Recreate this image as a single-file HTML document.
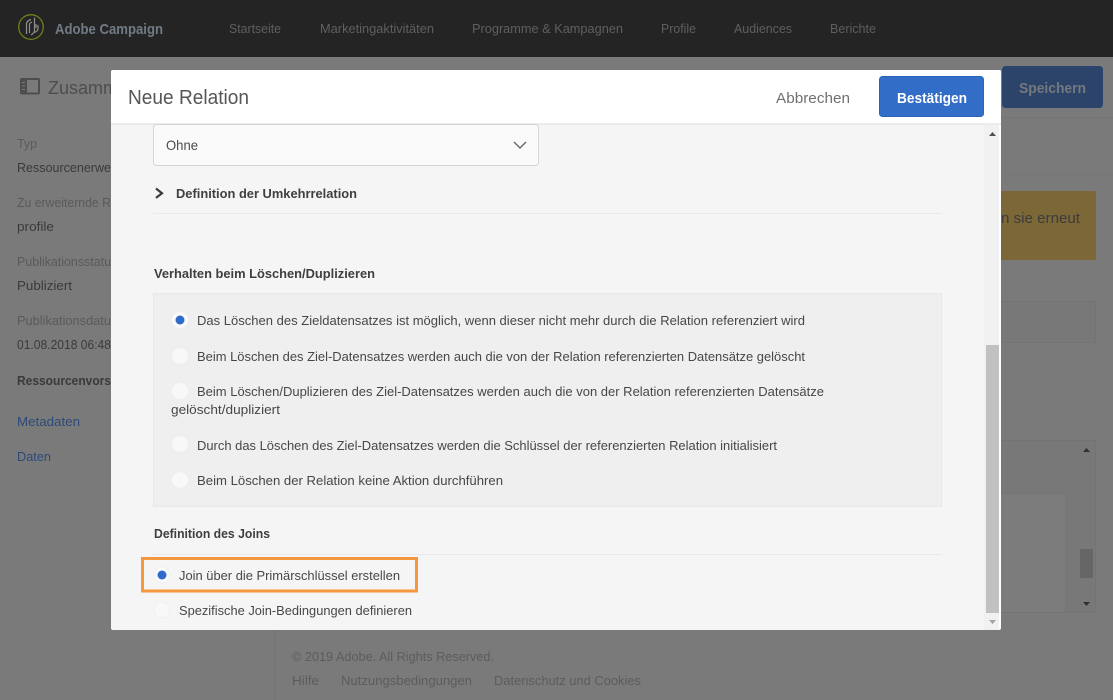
<!DOCTYPE html>
<html lang="de">
<head>
<meta charset="utf-8">
<title>Neue Relation</title>
<style>
html,body{margin:0;padding:0;width:1113px;height:700px;overflow:hidden;background:#7a7a7a}
svg{display:block}
text{font-family:"Liberation Sans",sans-serif;font-size:13px;fill:#4b4b4b;white-space:pre}
.n{font-size:13px;fill:#5f5f5f}
.s{fill:#3a3a3a}
.l{fill:#5a5a5a}
.m{fill:#474747}
.b{font-weight:bold;fill:#3f3f3f}
.f{fill:#5c5c5c;font-size:13px}
</style>
</head>
<body>
<svg width="1113" height="700" viewBox="0 0 1113 700" xmlns="http://www.w3.org/2000/svg">
<!-- background page -->
<rect width="1113" height="700" fill="#7a7a7a"/>
<rect width="1113" height="57" fill="#242424"/>
<circle cx="31" cy="27" r="12.300" fill="none" stroke="#6f7f1c" stroke-width="1.300"/>
<g fill="none" stroke="#8f8f8f" stroke-width="1.200">
<path d="M26.500 34V24Q26.500 21 31 19.500"/><path d="M29.500 33V24.500Q29.500 23 32 22"/><path d="M34.500 17.500V30Q34.500 33 31 35"/><path d="M38 25V28.500Q38 31 34.500 32.500"/><path d="M36 24V28"/>
</g>
<text x="55" y="34" textLength="108" lengthAdjust="spacingAndGlyphs" style="font-size:15px;font-weight:bold;fill:#717b86">Adobe Campaign</text>
<text class="n" x="229" y="33" textLength="52" lengthAdjust="spacingAndGlyphs">Startseite</text>
<text class="n" x="320" y="33" textLength="114" lengthAdjust="spacingAndGlyphs">Marketingaktivitäten</text>
<text class="n" x="472" y="33" textLength="151" lengthAdjust="spacingAndGlyphs">Programme &amp; Kampagnen</text>
<text class="n" x="661" y="33" textLength="35" lengthAdjust="spacingAndGlyphs">Profile</text>
<text class="n" x="734" y="33" textLength="58" lengthAdjust="spacingAndGlyphs">Audiences</text>
<text class="n" x="830" y="33" textLength="46" lengthAdjust="spacingAndGlyphs">Berichte</text>

<rect x="21" y="79" width="18" height="14.500" rx="1" fill="none" stroke="#4d4d4d" stroke-width="2"/>
<rect x="21" y="79" width="6" height="14.500" fill="#4d4d4d"/>
<path d="M22 82.500h3M22 86h3M22 89.500h3" stroke="#7a7a7a" stroke-width="1"/>
<text x="48" y="94" textLength="70" lengthAdjust="spacingAndGlyphs" style="font-size:18px;fill:#4d4d4d">Zusamm</text>
<rect x="1002.500" y="66.500" width="100" height="41" rx="3" fill="#2c4469" stroke="#2a4570"/>
<text x="1019" y="93" textLength="67" lengthAdjust="spacingAndGlyphs" style="font-size:15px;font-weight:bold;fill:#75797f">Speichern</text>
<path d="M1001 117.500H1113M1001 174H1113" stroke="#757575" stroke-width="1"/>
<rect x="990" y="191" width="106" height="69" rx="2" fill="#7c6737"/>
<text x="1001" y="223" textLength="79" lengthAdjust="spacingAndGlyphs" style="font-size:15px;fill:#3c3c3c">n sie erneut</text>
<rect x="990.500" y="301.500" width="105" height="41" fill="#787878" stroke="#747474"/>
<rect x="990.500" y="440.500" width="105" height="172" fill="#787878" stroke="#747474"/>
<rect x="990" y="495" width="75" height="117" rx="2" fill="#7c7c7c"/>
<path d="M1086.500 448l3.500 4h-7zM1086.500 606l3.500-4h-7z" fill="#303030"/>
<rect x="1080" y="549" width="13" height="29" fill="#666"/>

<text class="l" x="17" y="148" textLength="20" lengthAdjust="spacingAndGlyphs">Typ</text>
<text class="s" x="17" y="172" textLength="94" lengthAdjust="spacingAndGlyphs">Ressourcenerwe</text>
<text class="l" x="17" y="207" textLength="94" lengthAdjust="spacingAndGlyphs">Zu erweiternde R</text>
<text class="s" x="17" y="231" textLength="37" lengthAdjust="spacingAndGlyphs">profile</text>
<text class="l" x="17" y="266" textLength="94" lengthAdjust="spacingAndGlyphs">Publikationsstatu</text>
<text class="s" x="17" y="290" textLength="55" lengthAdjust="spacingAndGlyphs">Publiziert</text>
<text class="l" x="17" y="325" textLength="94" lengthAdjust="spacingAndGlyphs">Publikationsdatu</text>
<text class="s" x="17" y="349" textLength="94" lengthAdjust="spacingAndGlyphs">01.08.2018 06:48</text>
<text class="s" x="17" y="385" textLength="94" lengthAdjust="spacingAndGlyphs" style="font-weight:bold">Ressourcenvors</text>
<text x="17" y="426" textLength="63" lengthAdjust="spacingAndGlyphs" style="fill:#2d4a78">Metadaten</text>
<text x="17" y="461" textLength="34" lengthAdjust="spacingAndGlyphs" style="fill:#2d4a78">Daten</text>

<path d="M274.500 630V700" stroke="#747474"/>
<text class="f" x="292" y="661" textLength="202" lengthAdjust="spacingAndGlyphs">© 2019 Adobe. All Rights Reserved.</text>
<text class="f" x="292" y="685" textLength="27" lengthAdjust="spacingAndGlyphs">Hilfe</text>
<text class="f" x="341" y="685" textLength="131" lengthAdjust="spacingAndGlyphs">Nutzungsbedingungen</text>
<text class="f" x="494" y="685" textLength="147" lengthAdjust="spacingAndGlyphs">Datenschutz und Cookies</text>

<!-- modal -->
<rect x="111" y="70" width="890" height="560" rx="2" fill="#f5f5f5"/>
<path d="M111 123V72a2 2 0 0 1 2-2H999a2 2 0 0 1 2 2V123Z" fill="#fff"/>
<rect x="111" y="123" width="890" height="2" fill="#ececec"/>
<text x="128" y="104" textLength="121" lengthAdjust="spacingAndGlyphs" style="font-size:20px;fill:#565656">Neue Relation</text>
<text x="776" y="103" textLength="74" lengthAdjust="spacingAndGlyphs" style="font-size:15px;fill:#707070">Abbrechen</text>
<rect x="879.500" y="76.500" width="104" height="40" rx="3" fill="#326ec8" stroke="#2b63b8"/>
<text x="897" y="103" textLength="70" lengthAdjust="spacingAndGlyphs" style="font-size:15px;font-weight:bold;fill:#fff">Bestätigen</text>

<!-- scrollbar -->
<rect x="984" y="125" width="15" height="505" fill="#f1f1f1"/>
<rect x="986" y="345" width="13" height="268" fill="#c1c1c1"/>
<rect x="999" y="125" width="2" height="503" fill="#fff"/>
<path d="M992.500 132l3.500 4h-7z" fill="#505050"/>
<path d="M992.500 624l3.500-4h-7z" fill="#a3a3a3"/>

<!-- select -->
<rect x="153.500" y="124.500" width="385" height="41" rx="3" fill="#fafafa" stroke="#d5d5d5"/>
<text x="166" y="150" textLength="32" lengthAdjust="spacingAndGlyphs" style="font-size:14px;fill:#4b4b4b">Ohne</text>
<path d="M514 142l6 6 6-6" fill="none" stroke="#6e6e6e" stroke-width="1.500"/>

<path d="M156 188.500l6 4.700-6 4.700" fill="none" stroke="#3a3a3a" stroke-width="2.200"/>
<text x="176" y="198" textLength="181" lengthAdjust="spacingAndGlyphs" class="b">Definition der Umkehrrelation</text>
<rect x="153" y="213" width="789" height="1" fill="#e9e9e9"/>

<text x="154" y="278" textLength="221" lengthAdjust="spacingAndGlyphs" class="b">Verhalten beim Löschen/Duplizieren</text>

<rect x="153.500" y="293.500" width="788" height="213" fill="#efefef" stroke="#e8e8e8"/>

<circle cx="180" cy="320" r="8" fill="#fafafa"/><circle cx="180" cy="320" r="4.500" fill="#2f6bcb"/>
<text class="m" x="197" y="325" textLength="608" lengthAdjust="spacingAndGlyphs">Das Löschen des Zieldatensatzes ist möglich, wenn dieser nicht mehr durch die Relation referenziert wird</text>
<circle cx="180" cy="356" r="8" fill="#f8f8f8"/>
<text class="m" x="197" y="361" textLength="608" lengthAdjust="spacingAndGlyphs">Beim Löschen des Ziel-Datensatzes werden auch die von der Relation referenzierten Datensätze gelöscht</text>
<circle cx="180" cy="391" r="8" fill="#f8f8f8"/>
<text class="m" x="197" y="396" textLength="627" lengthAdjust="spacingAndGlyphs">Beim Löschen/Duplizieren des Ziel-Datensatzes werden auch die von der Relation referenzierten Datensätze</text>
<text class="m" x="171" y="414" textLength="109" lengthAdjust="spacingAndGlyphs">gelöscht/dupliziert</text>
<circle cx="180" cy="444" r="8" fill="#f8f8f8"/>
<text class="m" x="197" y="450" textLength="580" lengthAdjust="spacingAndGlyphs">Durch das Löschen des Ziel-Datensatzes werden die Schlüssel der referenzierten Relation initialisiert</text>
<circle cx="180" cy="480" r="8" fill="#f8f8f8"/>
<text class="m" x="197" y="485" textLength="306" lengthAdjust="spacingAndGlyphs">Beim Löschen der Relation keine Aktion durchführen</text>

<text x="154" y="538" textLength="116" lengthAdjust="spacingAndGlyphs" class="b">Definition des Joins</text>
<rect x="153" y="554" width="789" height="1" fill="#e9e9e9"/>

<rect x="142.500" y="558.500" width="274" height="32.500" fill="none" stroke="#f4973f" stroke-width="3"/>
<circle cx="162" cy="575" r="8" fill="#fafafa" stroke="#efefef"/><circle cx="162" cy="575" r="4.500" fill="#2f6bcb"/>
<text class="m" x="179" y="580" textLength="221" lengthAdjust="spacingAndGlyphs">Join über die Primärschlüssel erstellen</text>
<circle cx="162" cy="610" r="8" fill="#f8f8f8" stroke="#efefef"/>
<text class="m" x="179" y="615" textLength="233" lengthAdjust="spacingAndGlyphs">Spezifische Join-Bedingungen definieren</text>
</svg>
</body>
</html>
